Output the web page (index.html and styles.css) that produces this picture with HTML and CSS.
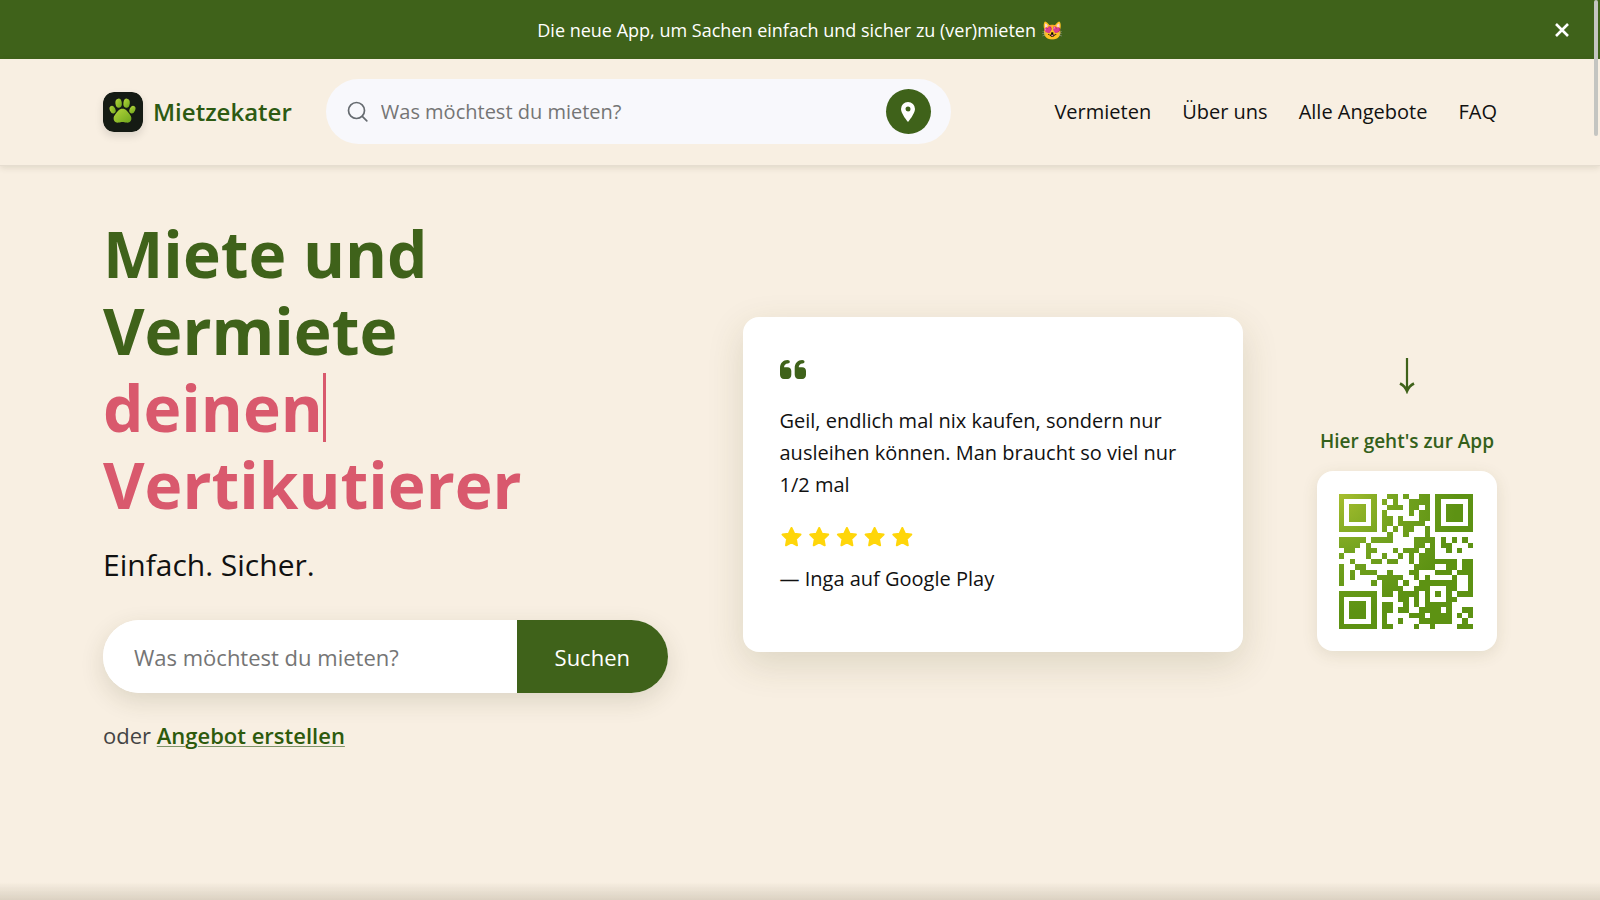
FILE: index.html
```html
<!DOCTYPE html>
<html lang="de">
<head>
<meta charset="utf-8">
<meta name="viewport" content="width=device-width, initial-scale=1">
<title>Mietzekater</title>
<link rel="stylesheet" href="styles.css">
</head>
<body>
<div class="banner">
  <p class="banner-text">Die neue App, um Sachen einfach und sicher zu (ver)mieten 😻</p>
  <button class="banner-close" type="button" aria-label="Schließen">
    <svg width="16" height="16" viewBox="0 0 16 16"><path d="M2 2 14 14M14 2 2 14" fill="none" stroke="currentColor" stroke-width="2.600"/></svg>
  </button>
</div>

<header class="header">
  <a class="brand" href="#">
    <svg class="brand-logo" viewBox="0 0 40 40" aria-hidden="true">
      <defs><linearGradient id="paw" x1="0" y1="0" x2="1" y2="1"><stop offset="0" stop-color="#b5d63c"/><stop offset="1" stop-color="#6fa61c"/></linearGradient></defs>
      <rect width="40" height="40" rx="11" fill="#151b14"/>
      <g fill="url(#paw)">
        <ellipse cx="15.6" cy="11.2" rx="3.2" ry="4.6" transform="rotate(-6 15.6 11.2)"/>
        <ellipse cx="23.6" cy="11.2" rx="3.2" ry="4.6" transform="rotate(6 23.6 11.2)"/>
        <ellipse cx="9.6" cy="17.6" rx="2.8" ry="4" transform="rotate(-24 9.6 17.6)"/>
        <ellipse cx="29.4" cy="17.6" rx="2.8" ry="4" transform="rotate(24 29.4 17.6)"/>
        <path d="M19.5 16.8c-3.6 0-5 2.8-6.6 4.8-1.500 1.900-2.700 3.600-2.200 5.800.6 2.700 2.900 3.500 5 3.200 1.500-.2 2.400-.7 3.800-.7s2.300.5 3.800.7c2.100.3 4.400-.5 5-3.200.5-2.200-.7-3.900-2.200-5.800-1.600-2-3-4.800-6.600-4.800z"/>
      </g>
    </svg>
    <span>Mietzekater</span>
  </a>
  <form class="top-search" role="search">
    <svg width="21" height="21" viewBox="0 0 21 21" aria-hidden="true"><g fill="none" stroke="#666b70" stroke-width="1.700" stroke-linecap="round"><circle cx="9.500" cy="9.500" r="8"/><path d="m15.300 15.300 4.500 4.500"/></g></svg>
    <input class="top-input" type="search" aria-label="Suche" placeholder="Was möchtest du mieten?">
    <button class="pin" type="button" aria-label="Standort">
      <svg width="14" height="20" viewBox="0 0 14 20"><path fill="#fff" fill-rule="evenodd" d="M7 0a7 7 0 0 0-7 7c0 3.300 3.800 9.300 7 13 3.200-3.700 7-9.700 7-13a7 7 0 0 0-7-7zm0 4.500a2.500 2.500 0 1 1 0 5 2.500 2.500 0 0 1 0-5z"/></svg>
    </button>
  </form>
  <nav class="nav">
    <a href="#">Vermieten</a>
    <a href="#">Über uns</a>
    <a href="#">Alle Angebote</a>
    <a href="#">FAQ</a>
  </nav>
</header>

<main class="hero">
  <section class="intro">
    <h1 class="title">Miete und<br>Vermiete<br><span class="typed">deinen<i class="caret"></i><br>Vertikutierer</span></h1>
    <p class="subtitle">Einfach. Sicher.</p>
    <form class="search">
      <input class="search-input" type="text" aria-label="Artikel suchen" placeholder="Was möchtest du mieten?">
      <button class="search-button" type="submit">Suchen</button>
    </form>
    <p class="create">oder <a href="#">Angebot erstellen</a></p>
  </section>

  <figure class="review">
    <svg class="quote" viewBox="0 0 26 19" aria-hidden="true"><g fill="#3f621a"><path id="q" d="M0 14.500V8C0 3.200 3.200 0 7.500 0 9 0 9.800.8 9.800 1.800S9 3.500 7.900 3.600C5.400 3.800 4.200 5.200 4 7.300H7.500C9.800 7.300 11.300 8.800 11.300 11V14.800C11.300 17.300 9.800 19 7.500 19H4C1.500 19 0 17.200 0 14.500z"/><use href="#q" x="14.700"/></g></svg>
    <blockquote class="review-text">Geil, endlich mal nix kaufen, sondern nur ausleihen können. Man braucht so viel nur 1/2 mal</blockquote>
    <svg class="stars" viewBox="0 0 134 20" role="img" aria-label="5 von 5 Sternen"><g fill="#ffd60a" stroke="#ffd60a" stroke-width="2" stroke-linejoin="round"><path id="s" d="m11.500 1 2.700 5.700 6.300.9-4.600 4.400 1.100 6.300-5.500-3-5.500 3 1.100-6.300L2.500 7.600l6.300-.9z"/><use href="#s" x="27.700"/><use href="#s" x="55.400"/><use href="#s" x="83.100"/><use href="#s" x="110.800"/></g></svg>
    <figcaption class="author">— Inga auf Google Play</figcaption>
  </figure>

  <aside class="app">
    <svg class="arrow" width="16" height="36" viewBox="0 0 16 36" aria-hidden="true"><path d="M8 0v32" stroke="#3f621a" stroke-width="2.200"/><path d="M1 25.500Q6 28 8 33Q10 28 15 25.500" fill="none" stroke="#3f621a" stroke-width="2.600"/></svg>
    <p class="app-label">Hier geht's zur App</p>
    <div class="qr-card">
      <svg class="qr" viewBox="0 0 25 25" preserveAspectRatio="none" shape-rendering="crispEdges" role="img" aria-label="QR-Code zur App">
        <defs><radialGradient id="leaf" gradientUnits="userSpaceOnUse" cx="0" cy="0" r="22"><stop offset="0" stop-color="#a6be2e"/><stop offset=".5" stop-color="#74a31f"/><stop offset="1" stop-color="#5d9213"/></radialGradient></defs>
        <g fill="none" stroke="url(#leaf)">
          <path d="M.5 .5h6v6h-6zM18.500 .5h6v6h-6zM.5 18.500h6v6h-6z"/>
          <path stroke-width="3.200" d="M1.900 3.500h3.200M19.900 3.500h3.200M1.900 21.500h3.200"/>
          <path d="M9 .5h2m1 0h1m2 0h2
            M8 1.500h1m1 0h1m2 0h4
            M9 2.500h3m1 0h2m1 0h1
            M8 3.500h1m4 0h1m1 0h2
            M8 4.500h2m1 0h1m3 0h2
            M8 5.500h2m1 0h5
            M8 6.500h1m1 0h1m1 0h2m2 0h1
            M9 7.500h1m2 0h1m3 0h1
            M0 8.500h5m1 0h4m4 0h4m1 0h1m1 0h1m1 0h1
            M0 9.500h4m1 0h1m8 0h2m1 0h1m1 0h2m3 0h1
            M1 10.500h2m2 0h2m3 0h1m1 0h3m1 0h2m2 0h1m1 0h1
            M0 11.500h1m4 0h1m2 0h1m2 0h1m1 0h1m1 0h3
            M2 12.500h1m3 0h2m1 0h2m2 0h1m1 0h7m1 0h2
            M0 13.500h1m2 0h2m9 0h4m2 0h2m1 0h2
            M0 14.500h1m1 0h1m1 0h3m2 0h1m3 0h2m3 0h3m1 0h3
            M0 15.500h1m1 0h1m4 0h5m2 0h1m1 0h1m4 0h1m2 0h1
            M0 16.500h1m5 0h1m1 0h3m1 0h1m2 0h7m2 0h1
            M8 17.500h4m2 0h3m3 0h2m2 0h1
            M8 18.500h2m1 0h4m1 0h1m1 0h1m1 0h1m1 0h3
            M11 19.500h2m1 0h1m1 0h1m3 0h2
            M8 20.500h2m2 0h1m1 0h1m1 0h5
            M8 21.500h2m1 0h2m2 0h4m1 0h1m2 0h2
            M8 22.500h1m4 0h3m1 0h4m1 0h1m1 0h1
            M8 23.500h1m2 0h1m3 0h6m2 0h1
            M8 24.500h2m4 0h1m2 0h1m4 0h3"/>
        </g>
      </svg>
    </div>
  </aside>
</main>
<div class="scroll-thumb"></div>
<div class="bottom-shade"></div>
</body>
</html>
```
FILE: styles.css
```css
* { box-sizing: border-box; }

body {
  margin: 0;
  min-height: 100vh;
  background: #f8efe2;
  color: #111;
  font-family: "Open Sans", "Noto Sans", sans-serif;
}

p, h1, figure, blockquote { margin: 0; }
input, button { font: inherit; border: 0; }
button { cursor: pointer; }

.banner {
  display: flex;
  align-items: center;
  padding: 0 30px;
  min-height: 59px;
  background: #3f621a;
  color: #fff;
}
.banner-text {
  flex: 1;
  padding-left: 16px;
  text-align: center;
  font-size: 18px;
  font-weight: 500;
}
.banner-close {
  display: flex;
  padding: 0;
  background: none;
  color: #fff;
}

.header {
  display: flex;
  align-items: center;
  padding: 20px 103px 21px;
  border-bottom: 1px solid #e6ddd0;
  box-shadow: 0 2px 6px rgba(60, 50, 20, 0.12);
}
.brand {
  display: flex;
  align-items: center;
  gap: 10px;
  color: #2d5a12;
  font-size: 24px;
  font-weight: 600;
  text-decoration: none;
}
.brand-logo {
  width: 40px;
  height: 40px;
  border-radius: 11px;
  box-shadow: 0 4px 8px rgba(0, 0, 0, 0.12);
}
.top-search {
  display: flex;
  align-items: center;
  flex: 0 1 625px;
  height: 65px;
  margin-left: 34px;
  padding: 0 20px 0 21px;
  gap: 13px;
  border-radius: 33px;
  background: #f8f8fc;
}
.top-input {
  flex: 1;
  min-width: 0;
  padding: 0;
  background: none;
  font-size: 20px;
}
.top-input::placeholder, .search-input::placeholder { color: #757575; opacity: 1; }
.pin {
  display: flex;
  align-items: center;
  justify-content: center;
  width: 45px;
  height: 45px;
  padding: 0;
  border-radius: 50%;
  background: #3f621a;
}
.nav {
  display: flex;
  gap: 31px;
  margin-left: auto;
  font-size: 20px;
  font-weight: 500;
  white-space: nowrap;
}
.nav a { color: #111; text-decoration: none; }

.hero {
  display: grid;
  grid-template-columns: 565px minmax(0, 500px) 180px;
  align-items: center;
  justify-content: space-between;
  padding: 49px 103px;
}
.title {
  color: #3f621a;
  font-size: 64px;
  font-weight: 700;
  line-height: 77px;
}
.typed { color: #d9596d; }
.caret {
  display: inline-block;
  width: 3px;
  height: 69px;
  margin: -10px 0;
  vertical-align: baseline;
  background: #d9596d;
}
.subtitle {
  margin-top: 19px;
  font-size: 30px;
  line-height: 46px;
}
.search {
  display: flex;
  height: 73px;
  margin-top: 32px;
  overflow: hidden;
  border-radius: 37px;
  background: #fff;
  box-shadow: 0 8px 24px rgba(60, 60, 20, 0.14);
}
.search-input {
  flex: 1;
  min-width: 0;
  padding: 0 31px;
  background: #fff;
  font-size: 22px;
}
.search-button {
  padding: 0 38px;
  background: #3f621a;
  color: #fff;
  font-size: 22px;
  font-weight: 500;
}
.create {
  margin-top: 25px;
  color: #444;
  font-size: 22px;
  line-height: 35px;
}
.create a {
  color: #2d5a0c;
  font-weight: 600;
  text-decoration-color: #7f9468;
  text-decoration-thickness: 1px;
  text-underline-offset: 2px;
}

.review {
  min-height: 335px;
  padding: 43px 37px;
  border-radius: 16px;
  background: #fff;
  box-shadow: 0 12px 36px rgba(80, 80, 30, 0.16);
}
.quote {
  display: block;
  width: 26px;
  height: 19px;
}
.review-text {
  margin-top: 26px;
  font-size: 20px;
  line-height: 32px;
}
.stars {
  display: block;
  width: 134px;
  height: 20px;
  margin-top: 26px;
}
.author {
  margin-top: 16px;
  font-size: 20px;
  font-weight: 500;
  line-height: 32px;
}

.app {
  display: flex;
  flex-direction: column;
  align-items: center;
  padding-top: 40px;
}
.app-label {
  margin-top: 32px;
  color: #34601a;
  font-size: 19px;
  font-weight: 600;
  line-height: 30px;
  white-space: nowrap;
}
.qr-card {
  width: 180px;
  margin-top: 15px;
  padding: 23px 24px 22px 22px;
  border-radius: 16px;
  background: #fff;
  box-shadow: 0 4px 16px rgba(80, 80, 30, 0.12);
}
.qr {
  display: block;
  width: 100%;
  height: 135px;
}

.scroll-thumb {
  position: fixed;
  top: 0;
  right: 2px;
  width: 4px;
  height: 136px;
  border-radius: 2px;
  background: #c4c5c1;
}
.bottom-shade {
  position: fixed;
  right: 0;
  bottom: 0;
  left: 0;
  height: 18px;
  background: linear-gradient(rgba(70, 60, 30, 0), rgba(70, 60, 30, 0.16));
}
```
